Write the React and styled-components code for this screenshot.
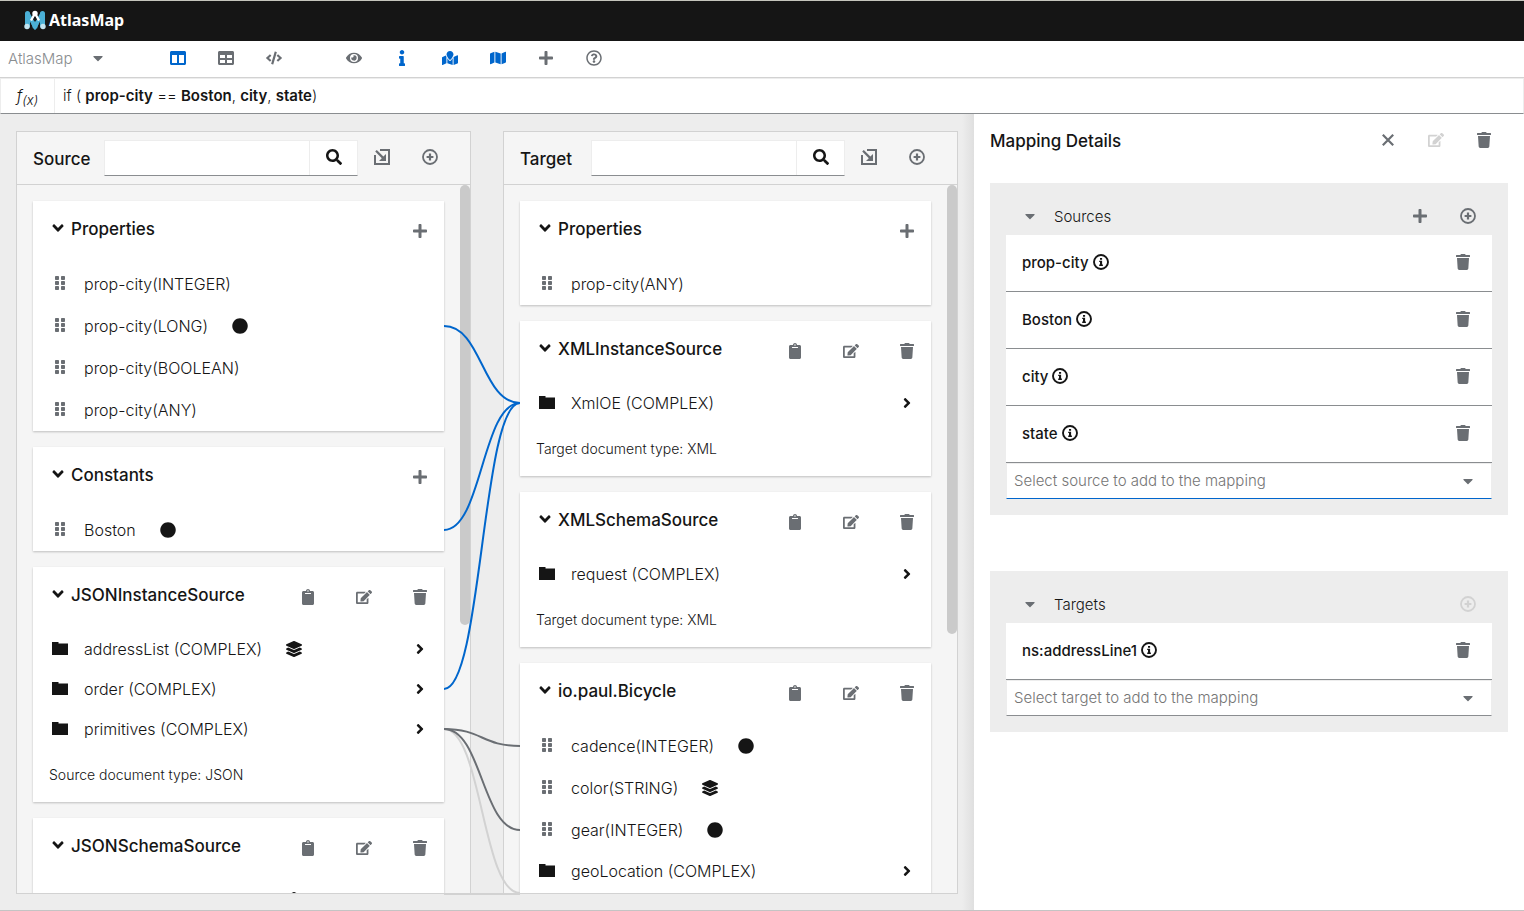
import React from "react";
import styled, { createGlobalStyle, css } from "styled-components";
import {
  FaColumns, FaTable, FaCode, FaEye, FaInfo, FaMapMarked, FaMap, FaPlus, FaRegQuestionCircle,
  FaCaretDown, FaSearch, FaAngleDown, FaAngleRight, FaGripVertical, FaClipboard, FaEdit, FaTrash,
  FaLayerGroup, FaCircle,
} from "react-icons/fa";

const c = {
  ink: "#151515",
  muted: "#8a8d90",
  icon: "#6a6e73",
  blue: "#0066cc",
  line: "#d2d2d2",
  bg: "#ededed",
  panel: "#f5f5f5",
};

const Global = createGlobalStyle`
  *, *::before, *::after { box-sizing: border-box; }
  body { margin: 0; background: #fff; }
  body, button, input, select {
    font-family: Inter, "Liberation Sans", sans-serif;
    font-size: 15px;
    font-weight: 300;
    color: ${c.ink};
  }
  h1, h2, h3, p, ul { margin: 0; padding: 0; list-style: none; }
`;

const Page = styled.div`
  display: flex;
  flex-direction: column;
  height: 100vh;
  border-top: 1px solid #c4c4bc;
  border-bottom: 1px solid #c4c4c4;
`;

const Masthead = styled.header`
  display: flex;
  align-items: center;
  gap: 3px;
  height: 40px;
  flex: none;
  padding: 0 24px 2px;
  background: ${c.ink};
`;

const Brand = styled.span`
  font-family: "Noto Sans", sans-serif;
  font-size: 16px;
  font-weight: 700;
  color: #fff;
`;

const Toolbar = styled.div`
  display: flex;
  align-items: center;
  gap: 32px;
  height: 37px;
  flex: none;
  padding-bottom: 2px;
  border-bottom: 1px solid ${c.line};
`;

const ToolGroup = styled.div`
  display: flex;
`;

const IconButton = styled.button`
  display: flex;
  align-items: center;
  justify-content: center;
  width: ${(p) => p.$w || 48}px;
  height: 36px;
  padding: 0;
  border: 0;
  background: none;
  font-size: 16px;
  color: ${(p) => (p.$active ? c.blue : p.$dark ? c.ink : c.icon)};
  &:disabled { color: ${c.line}; }
`;

const SelectWrap = styled.label`
  position: relative;
  display: block;
  color: ${c.icon};
  ${(p) => p.$boxed && css`
    background: #fff;
    border: 1px solid ${c.bg};
    border-bottom-color: ${p.$focused ? c.blue : c.muted};
  `}
  svg {
    position: absolute;
    right: ${(p) => (p.$boxed ? 15 : 16)}px;
    top: 50%;
    transform: translateY(-50%);
    pointer-events: none;
  }
`;

const Select = styled.select`
  appearance: none;
  display: block;
  width: ${(p) => p.$w || "100%"};
  height: 34px;
  padding: 0 32px ${(p) => (p.$boxed ? 2 : 0)}px ${(p) => (p.$boxed ? 7 : 8)}px;
  border: 0;
  outline: 0;
  background: none;
  color: ${(p) => (p.$boxed ? "#757575" : c.muted)};
`;

const Expression = styled.div`
  display: flex;
  align-items: stretch;
  height: 36px;
  flex: none;
  border: 1px solid ${c.bg};
  border-bottom-color: ${c.muted};
`;

const Fx = styled.span`
  display: flex;
  align-items: center;
  justify-content: center;
  width: 54px;
  border-right: 1px solid ${c.bg};
  font-style: italic;
  font-size: 16px;
  sub { font-size: 13px; vertical-align: -4px; }
`;

const Formula = styled.p`
  padding: 0 8px;
  line-height: 34px;
  white-space: pre;
  b { font-weight: 600; }
`;

const Main = styled.main`
  display: flex;
  flex: 1;
  min-height: 0;
`;

const Canvas = styled.div`
  position: relative;
  display: grid;
  grid-template-columns: 1fr 1fr;
  gap: 32px;
  flex: 1;
  min-width: 0;
  padding: 17px 16px 16px;
  background: linear-gradient(to left, #dfdfdf, ${c.bg} 12px);
`;

const Panel = styled.section`
  display: flex;
  flex-direction: column;
  min-width: 0;
  min-height: 0;
  border: 1px solid ${c.line};
  background: ${c.panel};
`;

const PanelHeader = styled.header`
  display: flex;
  align-items: center;
  height: 53px;
  flex: none;
  padding: 0 16px;
  border-bottom: 1px solid ${c.line};
`;

const Title = styled.h2`
  padding-top: 2px;
  font-size: 17px;
  font-weight: 500;
`;

const PanelTitle = styled(Title)`
  width: 71px;
`;

const Search = styled.div`
  display: flex;
  flex: 1;
  min-width: 0;
  height: 36px;
  border: 1px solid ${c.bg};
  border-bottom-color: ${c.muted};
  background: #fff;
  input {
    flex: 1;
    min-width: 0;
    border: 0;
    outline: 0;
    padding: 0 8px;
    background: none;
  }
  button {
    height: 34px;
    padding-bottom: 2px;
    border-left: 1px solid ${c.bg};
  }
`;

const PanelActions = styled.div`
  display: flex;
  padding-bottom: 2px;
`;

const Scroll = styled.div`
  display: flex;
  flex: 1;
  min-height: 0;
`;

const Cards = styled.div`
  display: flex;
  flex-direction: column;
  gap: 16px;
  flex: 1;
  min-width: 0;
  padding: 16px 16px 0;
  overflow: hidden;
`;

const Thumb = styled.div`
  width: 10px;
  height: ${(p) => p.$size}px;
  border-radius: 5px;
  background: #cacaca;
`;

const Card = styled.article`
  flex: none;
  background: #fff;
  box-shadow: 0 1px 2px rgba(3, 3, 3, 0.22);
  &:last-child { flex: 1 0 auto; }
`;

const CardHeader = styled.header`
  display: flex;
  align-items: center;
  justify-content: space-between;
  padding: 8px 4px 14px 18px;
`;

const Toggle = styled.button`
  display: flex;
  align-items: center;
  gap: 6px;
  height: 40px;
  padding: 0;
  border: 0;
  background: none;
  font-size: 17px;
  font-weight: 500;
  svg { width: 14px; height: 18px; margin-bottom: 2px; }
`;

const Actions = styled.div`
  display: flex;
  gap: 16px;
  padding-top: 4px;
`;

const Row = styled.li`
  display: flex;
  align-items: center;
  height: ${(p) => (p.$folder ? 40 : 42)}px;
  padding: 0 16px 0 19px;
  font-size: 16px;
  white-space: nowrap;
`;

const RowIcon = styled.span`
  display: flex;
  justify-content: center;
  width: 16px;
  margin-right: 16px;
  padding-bottom: 2px;
  color: ${(p) => (p.$dark ? c.ink : c.icon)};
`;

const Mark = styled.span`
  display: flex;
  margin-left: 24px;
`;

const Open = styled(IconButton)`
  margin-left: auto;
`;

const DocType = styled.p`
  height: 53px;
  padding: 0 16px;
  font-size: 14px;
  line-height: 52px;
`;

const Links = styled.svg`
  position: absolute;
  top: 0;
  left: calc(50% - 43px);
  pointer-events: none;
  fill: none;
`;

const Details = styled.aside`
  flex: none;
  width: 550px;
  padding: 8px 16px;
  background: #fff;
`;

const DetailsHeader = styled.header`
  display: flex;
  align-items: center;
  justify-content: space-between;
  height: 36px;
  margin-bottom: 25px;
`;

const Group = styled.section`
  margin-bottom: 56px;
  padding: 16px;
  background: ${c.bg};
`;

const GroupHeader = styled.header`
  display: flex;
  align-items: center;
  justify-content: space-between;
  height: 36px;
  padding-bottom: 2px;
`;

const GroupToggle = styled.button`
  display: flex;
  align-items: center;
  gap: 16px;
  height: 34px;
  padding: 0 16px;
  border: 0;
  background: none;
  svg { width: 16px; height: 16px; color: ${c.icon}; }
`;

const Item = styled.li`
  display: flex;
  align-items: center;
  gap: 4px;
  height: 57px;
  padding: 0 8px 2px 16px;
  border-bottom: 1px solid ${c.muted};
  background: #fff;
  font-weight: 500;
  button { margin-left: auto; }
`;

const Svg16 = (p) => <svg width="16" height="16" viewBox="0 0 16 16" fill="currentColor" aria-hidden="true" {...p} />;

const AddCircle = () => (
  <Svg16>
    <circle cx="8" cy="8" r="7" fill="none" stroke="currentColor" strokeWidth="1.8" />
    <path d="M6.9 4.6h2.2v2.3h2.3v2.2H9.1v2.3H6.9V9.1H4.6V6.9h2.3z" />
  </Svg16>
);

const InfoCircle = () => (
  <Svg16>
    <circle cx="8" cy="8" r="7" fill="none" stroke="currentColor" strokeWidth="1.9" />
    <path d="M7 3.9h2.1v1.9H7zM6.2 6.7h2.9v3.9h.8V12H6.2v-1.4H7V8.1h-.8z" />
  </Svg16>
);

const ImportIcon = () => (
  <Svg16>
    <path d="M6 0h10v16H0V6h2v8h12V2H6z" />
    <path d="M1.2 2.6 2.8 1l6.600 6.600L12 5v7H5l2.800-2.800z" />
  </Svg16>
);

const CloseIcon = () => (
  <Svg16>
    <path d="M2.800 2.800 13.200 13.200M13.200 2.800 2.800 13.200" fill="none" stroke="currentColor" strokeWidth="2.200" />
  </Svg16>
);

const FolderIcon = () => (
  <Svg16>
    <path d="M0 2h6.500v1.500H16V15H0z" />
  </Svg16>
);

const Logo = () => (
  <svg width="22" height="20" viewBox="0 0 22 20" aria-hidden="true">
    <g stroke="#4bb0d6" strokeLinecap="round" fill="none">
      <path d="M3.500 3.500v12M18.500 3.500v12" strokeWidth="5" />
      <path d="M4 4l7 12.500L18 4" strokeWidth="4" />
    </g>
    <g fill="#c3e4f1">
      <circle cx="3" cy="16.500" r="2.700" />
      <circle cx="19" cy="16.500" r="2.700" />
    </g>
    <path d="M7 10.500 11 3.500 15 10.500" fill="none" stroke="#fff" strokeWidth="2.400" />
    <circle cx="11" cy="3.500" r="2.700" fill="#fff" />
    <path d="M11 9.500 14.500 14 13 18.500H9L7.500 14z" fill="#4bb0d6" />
    <path d="M11 6.500 12.600 9.500 11 12 9.400 9.500z" fill="#151515" />
  </svg>
);

const marks = { circle: FaCircle, layers: FaLayerGroup };

const Field = ({ name, folder, mark }) => {
  const MarkIcon = marks[mark];
  return (
    <Row $folder={folder}>
      <RowIcon $dark={folder}>{folder ? <FolderIcon /> : <FaGripVertical />}</RowIcon>
      <span>{name}</span>
      {MarkIcon && <Mark><MarkIcon /></Mark>}
      {folder && <Open $dark $w={16} aria-label={`Open ${name}`}><FaAngleRight /></Open>}
    </Row>
  );
};

const Document = ({ title, fields, editable, type }) => (
  <Card>
    <CardHeader>
      <Toggle aria-expanded="true"><FaAngleDown />{title}</Toggle>
      <Actions>
        {editable ? (
          <>
            <IconButton $w={40} aria-label="Change name"><FaClipboard /></IconButton>
            <IconButton $w={40} aria-label="Edit"><FaEdit /></IconButton>
            <IconButton $w={40} aria-label="Delete"><FaTrash /></IconButton>
          </>
        ) : (
          <IconButton $w={40} aria-label="Add"><FaPlus /></IconButton>
        )}
      </Actions>
    </CardHeader>
    <ul>{fields.map((f) => <Field key={f.name} {...f} />)}</ul>
    {type && <DocType>{type}</DocType>}
  </Card>
);

const sources = [
  { title: "Properties", fields: [
    { name: "prop-city(INTEGER)" },
    { name: "prop-city(LONG)", mark: "circle" },
    { name: "prop-city(BOOLEAN)" },
    { name: "prop-city(ANY)" },
  ] },
  { title: "Constants", fields: [{ name: "Boston", mark: "circle" }] },
  { title: "JSONInstanceSource", editable: true, type: "Source document type: JSON", fields: [
    { name: "addressList (COMPLEX)", folder: true, mark: "layers" },
    { name: "order (COMPLEX)", folder: true },
    { name: "primitives (COMPLEX)", folder: true },
  ] },
  { title: "JSONSchemaSource", editable: true, fields: [
    { name: "addressList (COMPLEX)", folder: true, mark: "layers" },
  ] },
];

const targets = [
  { title: "Properties", fields: [{ name: "prop-city(ANY)" }] },
  { title: "XMLInstanceSource", editable: true, type: "Target document type: XML", fields: [
    { name: "XmlOE (COMPLEX)", folder: true },
  ] },
  { title: "XMLSchemaSource", editable: true, type: "Target document type: XML", fields: [
    { name: "request (COMPLEX)", folder: true },
  ] },
  { title: "io.paul.Bicycle", editable: true, fields: [
    { name: "cadence(INTEGER)", mark: "circle" },
    { name: "color(STRING)", mark: "layers" },
    { name: "gear(INTEGER)", mark: "circle" },
    { name: "geoLocation (COMPLEX)", folder: true },
  ] },
];

const DocumentPanel = ({ title, docs, thumb }) => (
  <Panel>
    <PanelHeader>
      <PanelTitle>{title}</PanelTitle>
      <Search>
        <input type="text" aria-label={`Search ${title}`} />
        <IconButton $dark aria-label="Search"><FaSearch /></IconButton>
      </Search>
      <PanelActions>
        <IconButton aria-label="Import"><ImportIcon /></IconButton>
        <IconButton aria-label="Add mapping"><AddCircle /></IconButton>
      </PanelActions>
    </PanelHeader>
    <Scroll>
      <Cards>{docs.map((d) => <Document key={d.title} {...d} />)}</Cards>
      <Thumb $size={thumb} />
    </Scroll>
  </Panel>
);

const MappingGroup = ({ title, items, placeholder, focused, constant }) => (
  <Group>
    <GroupHeader>
      <GroupToggle aria-expanded="true"><FaCaretDown />{title}</GroupToggle>
      <ToolGroup>
        {constant && <IconButton aria-label="Add constant"><FaPlus /></IconButton>}
        <IconButton aria-label="Add" disabled={!constant}><AddCircle /></IconButton>
      </ToolGroup>
    </GroupHeader>
    <ul>
      {items.map((i) => (
        <Item key={i}>
          {i}<InfoCircle />
          <IconButton $w={42} aria-label={`Remove ${i}`}><FaTrash /></IconButton>
        </Item>
      ))}
    </ul>
    <SelectWrap $boxed $focused={focused}>
      <Select $boxed aria-label={placeholder}><option>{placeholder}</option></Select>
      <FaCaretDown size={16} />
    </SelectWrap>
  </Group>
);

const tools = [
  [["Columns", FaColumns, true], ["Table", FaTable], ["Code", FaCode]],
  [["Preview", FaEye], ["Types", FaInfo, true], ["Mapped fields", FaMapMarked, true],
    ["Unmapped fields", FaMap, true], ["Add mapping", FaPlus], ["Help", FaRegQuestionCircle]],
];

export default function App() {
  return (
    <>
      <Global />
      <Page>
        <Masthead><Logo /><Brand>AtlasMap</Brand></Masthead>
        <Toolbar>
          <SelectWrap>
            <Select $w="122px" aria-label="Project"><option>AtlasMap</option></Select>
            <FaCaretDown size={16} />
          </SelectWrap>
          {tools.map((group, i) => (
            <ToolGroup key={i}>
              {group.map(([label, Icon, active]) => (
                <IconButton key={label} $active={active} aria-label={label}><Icon /></IconButton>
              ))}
            </ToolGroup>
          ))}
        </Toolbar>
        <Expression>
          <Fx><span>f<sub>(x)</sub></span></Fx>
          <Formula>if ( <b>prop-city</b> == <b>Boston</b>, <b>city</b>, <b>state</b>)</Formula>
        </Expression>
        <Main>
          <Canvas>
            <DocumentPanel title="Source" docs={sources} thumb={440} />
            <DocumentPanel title="Target" docs={targets} thumb={449} />
            <Links width="76" height="782" viewBox="0 0 76 782" strokeWidth="2">
              <g stroke={c.line}>
                <path d="M0 615C38 615 38 779 76 779" />
                <path d="M0 780H76" />
              </g>
              <g stroke={c.icon}>
                <path d="M0 615C38 615 38 632 76 632" />
                <path d="M0 615C38 615 38 716 76 716" />
              </g>
              <g stroke={c.blue}>
                <path d="M0 212C38 212 38 289 76 289" />
                <path d="M0 416C38 416 38 289 76 289" />
                <path d="M0 575C38 575 38 289 76 289" />
              </g>
            </Links>
          </Canvas>
          <Details>
            <DetailsHeader>
              <Title>Mapping Details</Title>
              <ToolGroup>
                <IconButton aria-label="Close"><CloseIcon /></IconButton>
                <IconButton aria-label="Edit" disabled><FaEdit /></IconButton>
                <IconButton aria-label="Delete"><FaTrash /></IconButton>
              </ToolGroup>
            </DetailsHeader>
            <MappingGroup title="Sources" constant focused items={["prop-city", "Boston", "city", "state"]} placeholder="Select source to add to the mapping" />
            <MappingGroup title="Targets" items={["ns:addressLine1"]} placeholder="Select target to add to the mapping" />
          </Details>
        </Main>
      </Page>
    </>
  );
}
